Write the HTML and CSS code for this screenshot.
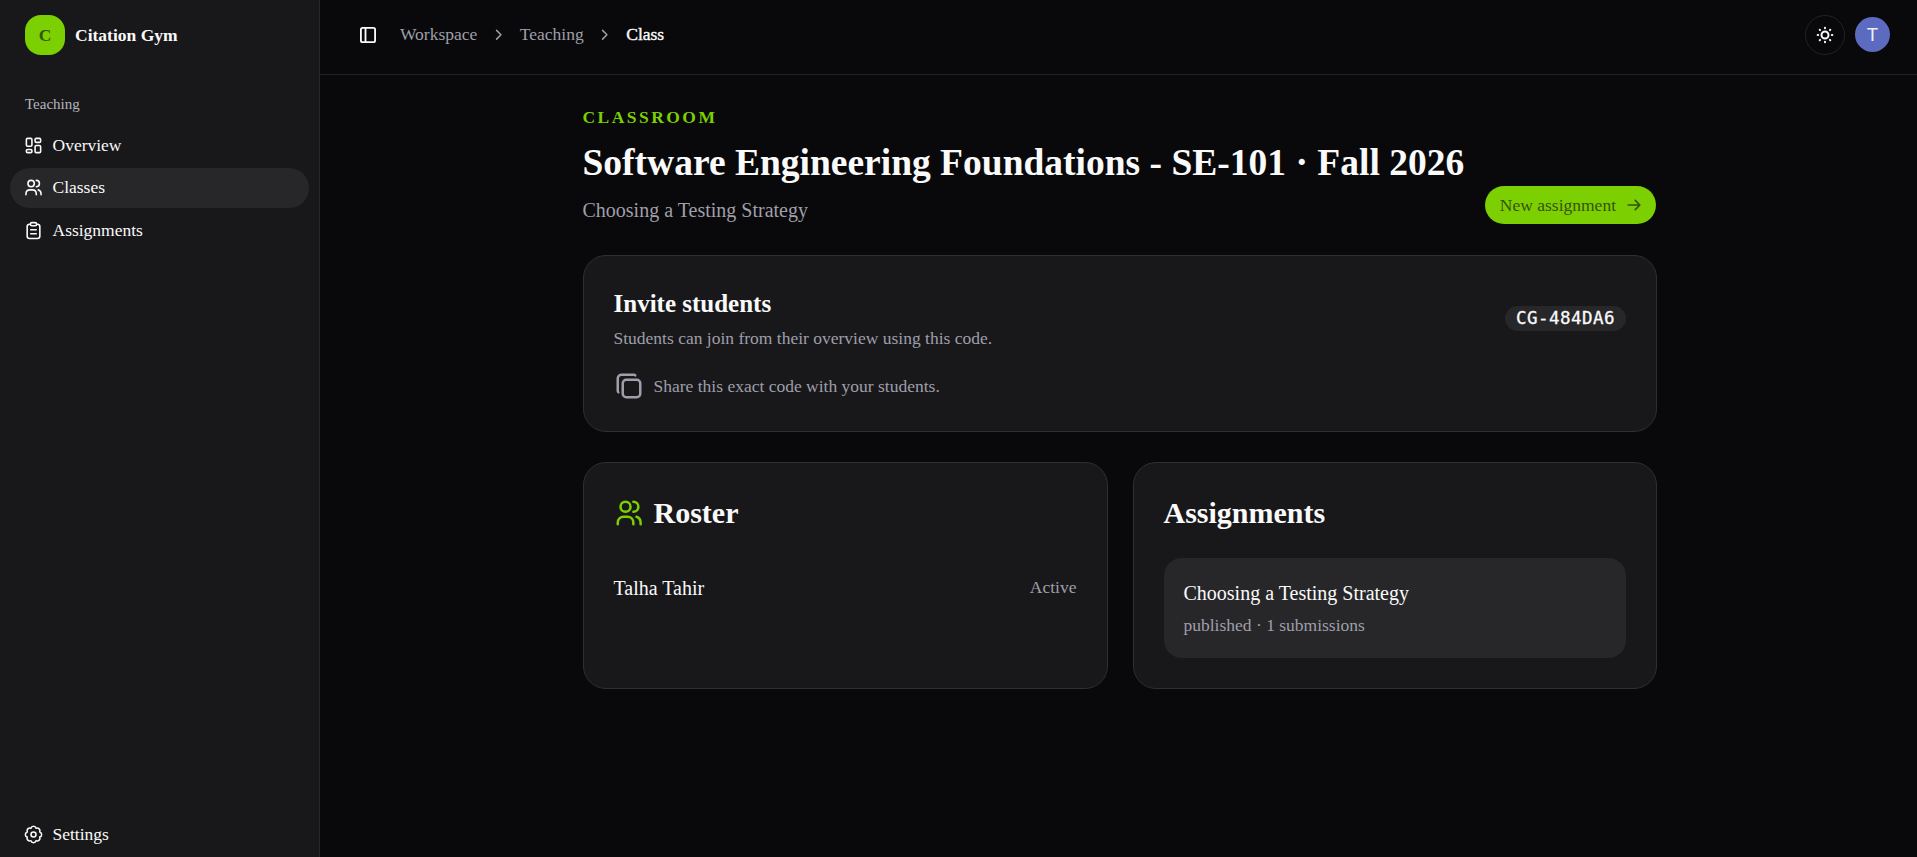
FILE: index.html
```
<!DOCTYPE html>
<html lang="en">
<head>
    <meta charset="UTF-8">
    <meta name="viewport" content="width=device-width, initial-scale=1.0">
    <title>Citation Gym</title>
    <link rel="stylesheet" href="styles.css">
</head>
<body>
    <aside class="sidebar">
        <div class="brand">
            <span class="logo">C</span>
            <span class="brand-name">Citation Gym</span>
        </div>

        <p class="nav-label">Teaching</p>
        <nav class="nav">
            <a href="#" class="nav-item">
                <svg class="icon" viewBox="0 0 24 24"><rect x="3" y="3" width="7" height="10" rx="1.5"/><rect x="14" y="3" width="7" height="5" rx="1.5"/><rect x="3" y="17" width="7" height="4" rx="1.5"/><rect x="14" y="12" width="7" height="9" rx="1.5"/></svg>
                Overview
            </a>
            <a href="#" class="nav-item active">
                <svg class="icon" viewBox="0 0 24 24"><circle cx="9" cy="7" r="4"/><path d="M15.5 3a4 4 0 0 1 0 8M2.5 21v-1c0-3 2-5 5-5h3c3 0 5 2 5 5v1M18 15c2.2 .6 3.5 2.6 3.5 5v1"/></svg>
                Classes
            </a>
            <a href="#" class="nav-item">
                <svg class="icon" viewBox="0 0 24 24"><rect x="4" y="4" width="16" height="18" rx="3"/><rect x="8" y="2" width="8" height="4" rx="2" class="clip"/><path d="M8.5 11h7M8.5 16h7"/></svg>
                Assignments
            </a>
        </nav>

        <a href="#" class="nav-item settings">
            <svg class="icon" viewBox="0 0 25 25"><path d="M20.6 15.9a3.5 3.5 0 0 1-4.7 4.7a3.5 3.5 0 0 1-6.8 0a3.5 3.5 0 0 1-4.7-4.7a3.5 3.5 0 0 1 0-6.8a3.5 3.5 0 0 1 4.7-4.7a3.5 3.5 0 0 1 6.8 0a3.5 3.5 0 0 1 4.7 4.7a3.5 3.5 0 0 1 0 6.8z"/><circle cx="12.5" cy="12.5" r="3.3"/></svg>
            Settings
        </a>
    </aside>

    <div class="page">
        <header class="topbar">
            <svg class="icon panel-icon" viewBox="0 0 24 24"><rect x="3.5" y="3.5" width="17" height="17" rx="2"/><path d="M9 3.5v17"/></svg>
            <div class="breadcrumb">
                <a href="#">Workspace</a>
                <svg class="chevron" viewBox="0 0 24 24"><path d="M9 6l6 6-6 6"/></svg>
                <a href="#">Teaching</a>
                <svg class="chevron" viewBox="0 0 24 24"><path d="M9 6l6 6-6 6"/></svg>
                <span class="current">Class</span>
            </div>
            <button class="theme-toggle">
                <svg class="icon" viewBox="0 0 24 24"><circle cx="12" cy="12" r="4.2"/><path d="M12 3.2v.6M12 20.2v.6M3.2 12h.6M20.2 12h.6M5.7 5.7l.4 .4M17.9 17.9l.4 .4M5.7 18.3l.4-.4M17.9 6.1l.4-.4"/></svg>
            </button>
            <span class="avatar">T</span>
        </header>

        <main class="content">
            <div class="page-head">
                <div>
                    <p class="eyebrow">CLASSROOM</p>
                    <h1>Software Engineering Foundations - SE-101 · Fall 2026</h1>
                    <p class="subtitle">Choosing a Testing Strategy</p>
                </div>
                <a href="#" class="button">
                    New assignment
                    <svg class="icon" viewBox="0 0 24 24"><path d="M5 12h14M13.5 6.5L19 12l-5.5 5.5"/></svg>
                </a>
            </div>

            <section class="card">
                <div class="invite-head">
                    <div>
                        <h2 class="invite-title">Invite students</h2>
                        <p class="muted">Students can join from their overview using this code.</p>
                    </div>
                    <span class="code">CG-484DA6</span>
                </div>
                <div class="share muted">
                    <svg class="icon-lg" viewBox="0 0 24 24"><rect x="7" y="7" width="14" height="14" rx="2.8"/><path d="M17 3.5Q16.7 3 16 3H6a3 3 0 0 0-3 3v10q0 .7 .5 1"/></svg>
                    Share this exact code with your students.
                </div>
            </section>

            <div class="grid">
                <section class="card">
                    <h2 class="card-title">
                        <svg class="icon-lg green" viewBox="0 0 24 24"><circle cx="9.2" cy="7" r="4"/><path d="M15.5 3a4 4 0 0 1 0 8M3 21v-1c0-3 2-5 4.8-5h2.9c2.8 0 4.8 2 4.8 5v1M18 15c2.1 .6 3.3 2.6 3.3 5v1"/></svg>
                        Roster
                    </h2>
                    <div class="student">
                        <span>Talha Tahir</span>
                        <span class="status muted">Active</span>
                    </div>
                </section>

                <section class="card">
                    <h2 class="card-title">Assignments</h2>
                    <div class="assignment">
                        <p class="assignment-name">Choosing a Testing Strategy</p>
                        <p class="muted">published · 1 submissions</p>
                    </div>
                </section>
            </div>
        </main>
    </div>
</body>
</html>
```
FILE: styles.css
```
* {
    box-sizing: border-box;
}

body {
    margin: 0;
    display: flex;
    height: 100vh;
    overflow: hidden;
    background-color: #09090b;
    color: #fafafa;
    font-family: "Liberation Serif", "Times New Roman", serif;
    font-size: 17.5px;
    line-height: 25px;
}

h1, h2, p {
    margin: 0;
}

a {
    color: inherit;
    text-decoration: none;
}

svg {
    flex-shrink: 0;
    fill: none;
    stroke: currentColor;
    stroke-width: 2;
    stroke-linecap: round;
    stroke-linejoin: round;
}

.icon {
    width: 20px;
    height: 20px;
}

.icon-lg {
    width: 30px;
    height: 30px;
}

.green {
    color: #7ccf00;
}

.muted {
    color: #9f9fa9;
}

/* sidebar */
.sidebar {
    width: 320px;
    flex-shrink: 0;
    display: flex;
    flex-direction: column;
    padding: 15px 10px 3px;
    background-color: #18181b;
    border-right: 1px solid #27272a;
}

.brand {
    display: flex;
    align-items: center;
    gap: 10px;
    padding-left: 15px;
}

.logo {
    width: 40px;
    height: 40px;
    border-radius: 16px;
    background-color: #7ccf00;
    color: #35530e;
    font-weight: bold;
    line-height: 40px;
    text-align: center;
}

.brand-name {
    font-weight: bold;
}

.nav-label {
    margin: 39px 0 11px;
    padding-left: 15px;
    font-size: 15px;
    line-height: 20px;
    color: #b5b5bb;
}

.nav {
    display: flex;
    flex-direction: column;
    gap: 2.5px;
}

.nav-item {
    display: flex;
    align-items: center;
    gap: 10px;
    height: 40px;
    padding: 0 13.5px;
    border-radius: 20px;
}

.nav-item .icon {
    width: 19px;
    height: 19px;
}

.nav-item.active {
    width: 299px;
    background-color: #27272a;
}

.clip {
    fill: #18181b;
}

.settings {
    margin-top: auto;
}

/* top bar */
.page {
    flex: 1;
    min-width: 0;
}

.topbar {
    display: flex;
    align-items: center;
    height: 75px;
    padding: 0 27px 5px 38px;
    border-bottom: 1px solid #222225;
}

.panel-icon {
    stroke-width: 2.2;
}

.breadcrumb {
    display: flex;
    align-items: center;
    gap: 12.5px;
    margin-left: 22px;
    margin-right: auto;
    color: #9f9fa9;
}

.chevron {
    width: 17.5px;
    height: 17.5px;
}

.current {
    color: #fafafa;
    -webkit-text-stroke: 0.4px #fafafa;
}

.theme-toggle {
    display: flex;
    align-items: center;
    justify-content: center;
    width: 40px;
    height: 40px;
    padding: 0;
    margin-right: 10px;
    border: 1px solid #222225;
    border-radius: 50%;
    background: none;
    color: #fafafa;
}

.theme-toggle .icon {
    stroke-width: 2.4;
}

.avatar {
    width: 35px;
    height: 35px;
    border-radius: 50%;
    background-color: #5c6bc0;
    color: #eceef8;
    font-family: Roboto, sans-serif;
    font-size: 19px;
    line-height: 35px;
    text-align: center;
}

/* content */
.content {
    width: 1074px;
    margin-left: 263px;
    padding-top: 30px;
}

.page-head {
    display: flex;
    justify-content: space-between;
    align-items: flex-end;
    margin: 0 1px 31px -0.5px;
}

.eyebrow {
    color: #7ccf00;
    font-weight: bold;
    letter-spacing: 2.45px;
}

h1 {
    margin: 8px 0;
    font-size: 37.5px;
    line-height: 50px;
}

.subtitle {
    font-size: 20px;
    line-height: 28px;
    color: #9f9fa9;
}

.button {
    display: flex;
    align-items: center;
    gap: 7.5px;
    height: 38px;
    padding: 0 12.5px 0 15px;
    border-radius: 19px;
    background-color: #7ccf00;
    color: #35530e;
}

.card {
    padding: 30px 30px 30px 29.5px;
    border: 1px solid #2f2f31;
    border-radius: 23px;
    background-color: #18181b;
}

.invite-head {
    display: flex;
    justify-content: space-between;
    align-items: center;
}

.invite-title {
    margin-bottom: 5px;
    font-size: 25px;
    line-height: 35px;
}

.code {
    padding: 0 11px;
    border-radius: 12.5px;
    background-color: #27272a;
    font-family: "DejaVu Sans Mono", monospace;
    font-size: 17.5px;
    letter-spacing: 0.47px;
    -webkit-text-stroke: 0.3px #fafafa;
}

.share {
    display: flex;
    align-items: center;
    gap: 10px;
    margin-top: 20px;
}

.grid {
    display: grid;
    grid-template-columns: 1fr 1fr;
    gap: 25px;
    margin-top: 30px;
}

.grid .card:last-child {
    padding-left: 30px;
}

.card-title {
    display: flex;
    align-items: center;
    gap: 10px;
    font-size: 30px;
    line-height: 40px;
}

.student {
    display: flex;
    justify-content: space-between;
    align-items: flex-start;
    margin-top: 25px;
    padding: 15px 0;
    font-size: 20px;
    line-height: 30px;
}

.status {
    font-size: 17.5px;
    line-height: 28px;
}

.assignment {
    margin-top: 25px;
    padding: 20px;
    border-radius: 18px;
    background-color: #27272a;
}

.assignment-name {
    margin-bottom: 5px;
    font-size: 20px;
    line-height: 30px;
}
```
